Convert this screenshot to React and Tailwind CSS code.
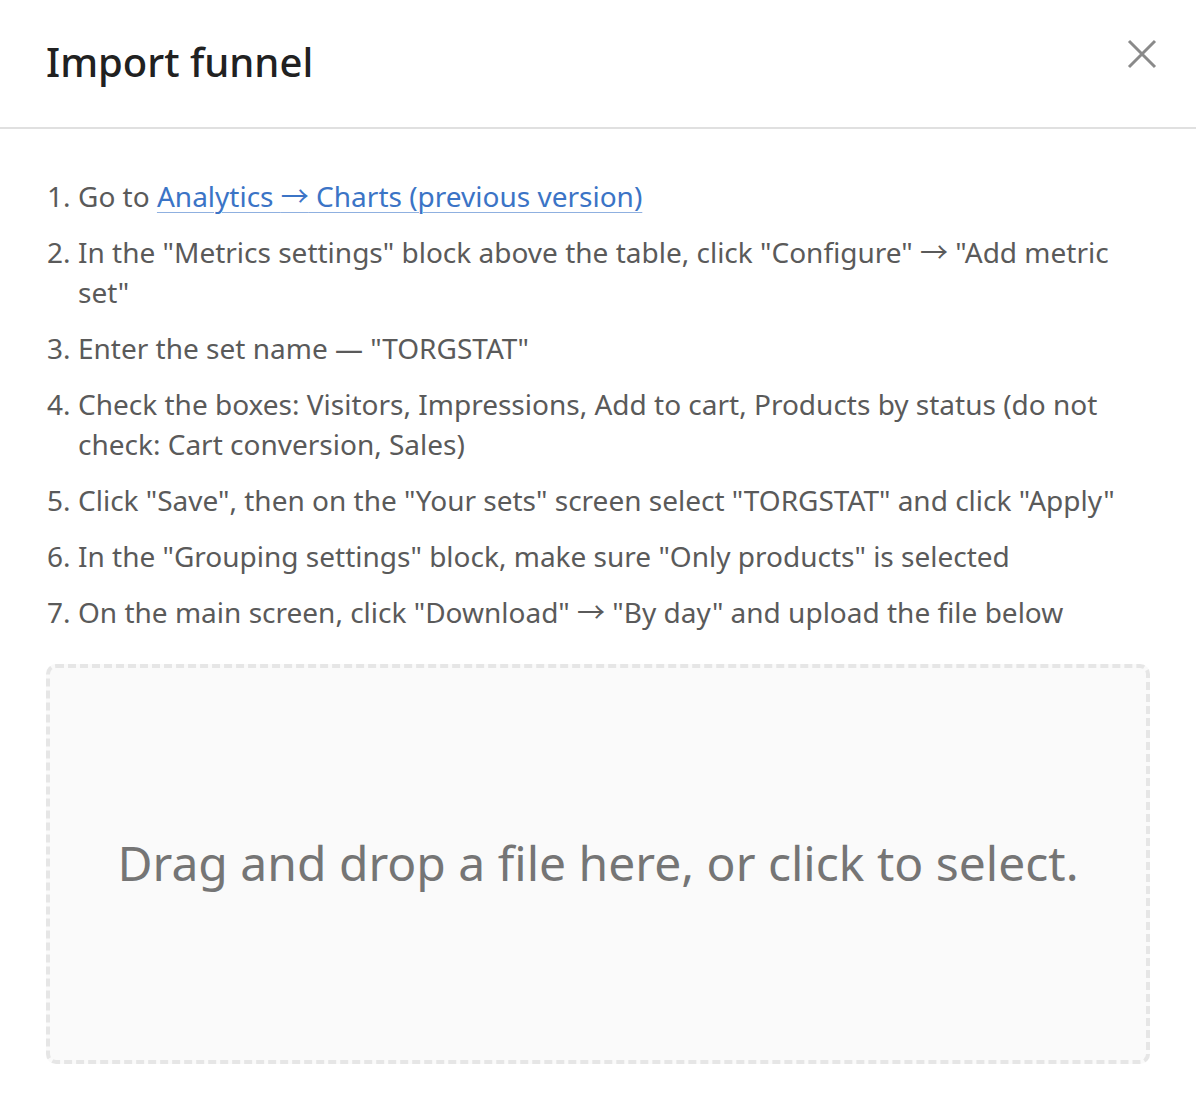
import React from "react";

const Arrow = () => (
  <span className="font-['Noto_Sans_CJK_JP',_sans-serif] leading-none">→</span>
);

const steps = [
  <>
    Go to{" "}
    <a
      href="#"
      className="text-[#3b74c6] underline decoration-[#8fb0e0] decoration-1 underline-offset-[5px]"
    >
      Analytics <Arrow /> Charts (previous version)
    </a>
  </>,
  <>
    In the "Metrics settings" block above the table, click "Configure" <Arrow /> "Add metric set"
  </>,
  <>Enter the set name — "TORGSTAT"</>,
  <>
    Check the boxes: Visitors, Impressions, Add to cart, Products by status (do not check: Cart
    conversion, Sales)
  </>,
  <>Click "Save", then on the "Your sets" screen select "TORGSTAT" and click "Apply"</>,
  <>In the "Grouping settings" block, make sure "Only products" is selected</>,
  <>
    On the main screen, click "Download" <Arrow /> "By day" and upload the file below
  </>,
];

const App = () => {
  return (
    <div className="w-[1196px] h-[1095px] bg-white font-['Noto_Sans',_sans-serif] overflow-hidden">
      {/* HEADER */}
      <div className="h-[129px] flex items-center justify-between pl-[46px] pr-[40px] border-b-2 border-[#e0e0e0]">
        <h2 className="text-[40px] font-medium text-[#212121] leading-none -mt-[4px]">
          Import funnel
        </h2>
        <button className="w-[36px] h-[36px] flex items-center justify-center -mt-[20px] mr-[-4px]">
          <svg width="30" height="30" viewBox="0 0 30 30" fill="none">
            <path d="M2 2 L28 28 M28 2 L2 28" stroke="#8a8a8a" strokeWidth="3" />
          </svg>
        </button>
      </div>

      {/* BODY */}
      <div className="px-[46px] pt-[47px] pb-[32px]">
        <ol className="flex flex-col gap-[16px] text-[28px] leading-[40px] text-[#5a5a5a]">
          {steps.map((s, i) => (
            <li key={i} className="flex">
              <span className="w-[32px] shrink-0 pl-[1px]">{i + 1}.</span>
              <span>{s}</span>
            </li>
          ))}
        </ol>

        <div className="mt-[32px] h-[400px] rounded-[10px] border-4 border-dashed border-[#e6e6e6] bg-[#fafafa] flex items-center justify-center cursor-pointer">
          <p className="text-[48px] text-[#757575] -mt-[2px]">
            Drag and drop a file here, or click to select.
          </p>
        </div>
      </div>
    </div>
  );
};

export default App;
